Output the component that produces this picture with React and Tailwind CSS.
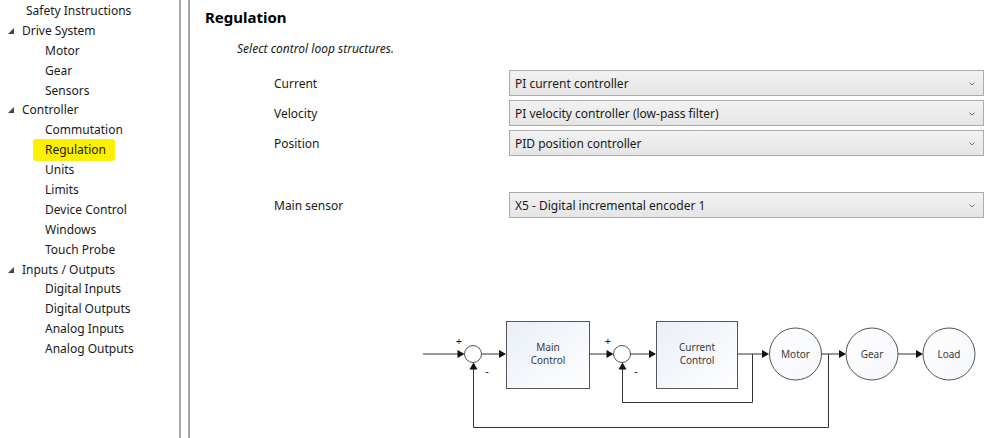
const tree = [
  { label: "Safety Instructions", level: 0 },
  { label: "Drive System", level: 1, group: true },
  { label: "Motor", level: 2 },
  { label: "Gear", level: 2 },
  { label: "Sensors", level: 2 },
  { label: "Controller", level: 1, group: true },
  { label: "Commutation", level: 2 },
  { label: "Regulation", level: 2, active: true },
  { label: "Units", level: 2 },
  { label: "Limits", level: 2 },
  { label: "Device Control", level: 2 },
  { label: "Windows", level: 2 },
  { label: "Touch Probe", level: 2 },
  { label: "Inputs / Outputs", level: 1, group: true },
  { label: "Digital Inputs", level: 2 },
  { label: "Digital Outputs", level: 2 },
  { label: "Analog Inputs", level: 2 },
  { label: "Analog Outputs", level: 2 }
];

const loops = [
  { label: "Current", value: "PI current controller" },
  { label: "Velocity", value: "PI velocity controller (low-pass filter)" },
  { label: "Position", value: "PID position controller" }
];

function Expander() {
  return (
    <svg width="6" height="6" viewBox="0 0 6 6" className="mr-[8px] shrink-0">
      <polygon points="6,0 6,6 0,6" fill="#444" />
    </svg>
  );
}

function TreeItem({ item }) {
  const pad = item.level === 0 ? "pl-[26px]" : item.level === 1 ? "pl-[8px]" : "pl-[45px]";
  return (
    <div className={`flex h-[19.9px] items-center ${pad}`}>
      {item.group ? <Expander /> : null}
      {item.active ? (
        <span className="-ml-[12px] rounded-[3px] bg-[#fff000] py-[5px] pl-[12px] pr-[9px] text-[#1a1a1a]">{item.label}</span>
      ) : (
        <span className="text-[#1a1a1a]">{item.label}</span>
      )}
    </div>
  );
}

function Dropdown({ value }) {
  return (
    <div className="flex h-[26px] w-[475px] items-center justify-between border border-[#acacac] bg-gradient-to-b from-[#f2f2f2] to-[#e5e5e5] pl-[5px] pr-[8px] pt-[1px] text-[#1a1a1a]">
      <span>{value}</span>
      <svg width="6" height="4" viewBox="0 0 6 4">
        <path d="M0.5 0.5 L3 3 L5.5 0.5" fill="none" stroke="#777" strokeWidth="1" />
      </svg>
    </div>
  );
}

function Arrow({ x1, x2, y }) {
  return (
    <g>
      <line x1={x1} y1={y} x2={x2 - 6} y2={y} stroke="#333" />
      <polygon points={`${x2 - 7},${y - 4} ${x2},${y} ${x2 - 7},${y + 4}`} fill="#111" />
    </g>
  );
}

function UpArrow({ x, y }) {
  return <polygon points={`${x - 4},${y + 7} ${x},${y} ${x + 4},${y + 7}`} fill="#111" />;
}

function Diagram() {
  const text = { fontFamily: "'Noto Sans', 'Open Sans', sans-serif", fontSize: 10, fill: "#3a3a3a", textAnchor: "middle" };
  return (
    <svg width="575" height="128" viewBox="0 0 575 128" className="ml-[220px] mt-[92px] block">
      <defs>
        <linearGradient id="boxfill" x1="0" y1="0" x2="1" y2="1">
          <stop offset="0" stopColor="#e9eef8" />
          <stop offset="1" stopColor="#ffffff" />
        </linearGradient>
        <linearGradient id="circfill" x1="0" y1="0" x2="1" y2="1">
          <stop offset="0" stopColor="#ffffff" />
          <stop offset="1" stopColor="#f4f6fa" />
        </linearGradient>
      </defs>

      <Arrow x1={13} x2={54.5} y={44} />
      <circle cx="63" cy="44" r="8.5" fill="#fff" stroke="#555" />
      <text x="49" y="35" {...text} fontSize="11" fill="#111">+</text>
      <text x="77" y="65" {...text} fontSize="11" fill="#111">-</text>
      <Arrow x1={71.5} x2={96} y={44} />

      <rect x="96.5" y="11.5" width="83" height="67" fill="url(#boxfill)" stroke="#555" />
      <text x="138" y="41" {...text}>Main</text>
      <text x="138" y="54" {...text}>Control</text>

      <Arrow x1={179.5} x2={203.5} y={44} />
      <circle cx="212" cy="44" r="8.5" fill="#fff" stroke="#555" />
      <text x="198" y="35" {...text} fontSize="11" fill="#111">+</text>
      <text x="226" y="65" {...text} fontSize="11" fill="#111">-</text>
      <Arrow x1={220.5} x2={246} y={44} />

      <rect x="246.5" y="11.5" width="81" height="67" fill="url(#boxfill)" stroke="#555" />
      <text x="287" y="41" {...text}>Current</text>
      <text x="287" y="54" {...text}>Control</text>

      <Arrow x1={327.5} x2={359} y={44} />
      <polyline points="342.5,44 342.5,92.5 212.5,92.5 212.5,55" fill="none" stroke="#333" />
      <UpArrow x={212.5} y={52.5} />

      <circle cx="385.5" cy="44" r="26" fill="url(#circfill)" stroke="#555" />
      <text x="385.5" y="47.5" {...text}>Motor</text>

      <Arrow x1={411.5} x2={436} y={44} />
      <polyline points="418.5,44 418.5,117.5 63.5,117.5 63.5,55" fill="none" stroke="#333" />
      <UpArrow x={63.5} y={52.5} />

      <circle cx="462" cy="44" r="26" fill="url(#circfill)" stroke="#555" />
      <text x="462" y="47.5" {...text}>Gear</text>

      <Arrow x1={488} x2={513} y={44} />
      <circle cx="539" cy="44" r="26" fill="url(#circfill)" stroke="#555" />
      <text x="539" y="47.5" {...text}>Load</text>
    </svg>
  );
}

export default function App() {
  return (
    <div
      className="flex h-[438px] w-[991px] overflow-hidden bg-white text-[12px] text-[#1a1a1a]"
      style={{ fontFamily: "'Noto Sans', 'Open Sans', sans-serif" }}
    >
      <aside className="w-[181px] shrink-0 border-r-2 border-[#a8a8a8] pt-[1px] leading-none">
        {tree.map((item) => (
          <TreeItem key={item.label} item={item} />
        ))}
      </aside>
      <div className="w-[9px] shrink-0 border-r-2 border-[#a8a8a8]" />

      <main className="flex-1">
        <div className="flex h-[35px] items-center pl-[15px]">
          <h1 className="text-[15px] font-bold text-black">Regulation</h1>
        </div>
        <div className="flex h-[28px] items-center pl-[47px]">
          <p className="italic">Select control loop structures.</p>
        </div>

        <div className="mt-[7px] flex flex-col gap-[4px]">
          {loops.map((row) => (
            <div key={row.label} className="flex items-center">
              <span className="w-[319px] pl-[84px] pt-[1px]">{row.label}</span>
              <Dropdown value={row.value} />
            </div>
          ))}
        </div>

        <div className="mt-[36px] flex items-center">
          <span className="w-[319px] pl-[84px] pt-[1px]">Main sensor</span>
          <Dropdown value="X5 - Digital incremental encoder 1" />
        </div>

        <Diagram />
      </main>
    </div>
  );
}
